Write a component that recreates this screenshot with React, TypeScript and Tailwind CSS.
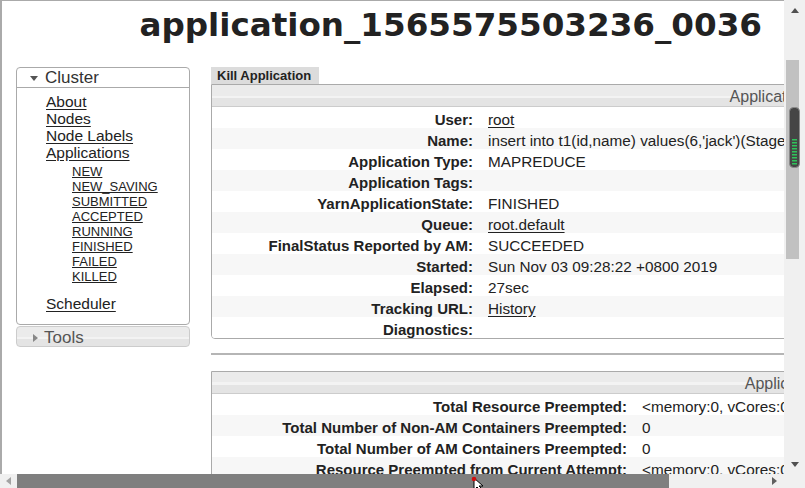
import React from "react";

const subStates = ["NEW", "NEW_SAVING", "SUBMITTED", "ACCEPTED", "RUNNING", "FINISHED", "FAILED", "KILLED"];

const overview: { label: string; value: string; link?: boolean }[] = [
  { label: "User:", value: "root", link: true },
  { label: "Name:", value: "insert into t1(id,name) values(6,'jack')(Stage-1)" },
  { label: "Application Type:", value: "MAPREDUCE" },
  { label: "Application Tags:", value: "" },
  { label: "YarnApplicationState:", value: "FINISHED" },
  { label: "Queue:", value: "root.default", link: true },
  { label: "FinalStatus Reported by AM:", value: "SUCCEEDED" },
  { label: "Started:", value: "Sun Nov 03 09:28:22 +0800 2019" },
  { label: "Elapsed:", value: "27sec" },
  { label: "Tracking URL:", value: "History", link: true },
  { label: "Diagnostics:", value: "" },
];

const metrics = [
  { label: "Total Resource Preempted:", value: "<memory:0, vCores:0>" },
  { label: "Total Number of Non-AM Containers Preempted:", value: "0" },
  { label: "Total Number of AM Containers Preempted:", value: "0" },
  { label: "Resource Preempted from Current Attempt:", value: "<memory:0, vCores:0>" },
];

// header strip shared by the widget boxes
const stripe = "bg-[linear-gradient(#ebebeb_0%,#ebebeb_50%,#f3f3f3_50%,#f3f3f3_62%,#e4e4e4_62%,#e4e4e4_100%)]";

const InfoTable = ({
  title,
  rows,
  labelWidth,
}: {
  title: string;
  rows: { label: string; value: string; link?: boolean }[];
  labelWidth: string;
}) => (
  <div className="w-[675px] border border-[#aaa] rounded-b-[4px] overflow-hidden">
    <div className={`h-[22px] border-b border-[#ccc] ${stripe} text-right pr-[6px] pt-[2px] text-[16px] leading-[20px] text-[#555]`}>
      {title}
    </div>
    {rows.map((r, i) => (
      <div key={r.label} className={`flex h-[21px] items-start pt-[5px] leading-[16px] text-[15px] whitespace-nowrap ${i % 2 === 1 ? "bg-[#f7f7f7]" : "bg-white"}`}>
        <div className={`${labelWidth} shrink-0 text-right font-bold pr-[8px]`}>{r.label}</div>
        <div className="pl-[7px] text-[15.3px]">
          {r.link ? <span className="underline underline-offset-2">{r.value}</span> : r.value}
        </div>
      </div>
    ))}
  </div>
);

const Triangle = ({ dir, color }: { dir: "up" | "down" | "left" | "right"; color: string }) => {
  const pts = {
    up: "0,5 8,5 4,0",
    down: "0,0 8,0 4,5",
    left: "5,0 5,8 0,4",
    right: "0,0 0,8 5,4",
  }[dir];
  const w = dir === "up" || dir === "down" ? 8 : 5;
  const h = dir === "up" || dir === "down" ? 5 : 8;
  return (
    <svg width={w} height={h} viewBox={`0 0 ${w} ${h}`}>
      <polygon points={pts} fill={color} />
    </svg>
  );
};

export default function App() {
  return (
    <div className="relative w-[805px] h-[488px] overflow-hidden bg-white text-[#222] font-['Liberation_Sans',Arial,sans-serif]">
      <div className="flex h-[474px]">
        {/* page viewport */}
        <div className="w-[784px] h-full overflow-hidden border-t border-l-2 border-[#aaa]">
          <div className="w-[782px] h-[66px] pt-[8px] pr-[22px] text-right">
            <h1 className="font-['DejaVu_Sans',Verdana,sans-serif] font-bold text-[32.6px] leading-[32px] text-[#222] whitespace-nowrap">
              application_1565575503236_0036
            </h1>
          </div>

          <div className="flex items-start w-[1000px] pl-[14px] gap-[21px]">
            {/* nav */}
            <div className="w-[174px] shrink-0">
              <div className="border border-[#aaa] rounded-[4px]">
                <div className="h-[20px] flex items-center gap-[7px] pl-[13px] pt-[1px] border-b border-[#aaa]">
                  <Triangle dir="down" color="#555" />
                  <span className="text-[17px] leading-[20px] text-[#333]">Cluster</span>
                </div>
                <div className="pt-[5px] pl-[29px] pb-[12px]">
                  {["About", "Nodes", "Node Labels", "Applications"].map((l) => (
                    <div key={l} className="text-[15.5px] leading-[17px]">
                      <span className="underline underline-offset-2">{l}</span>
                    </div>
                  ))}
                  <div className="mt-[3px] pl-[26px]">
                    {subStates.map((s) => (
                      <div key={s} className="text-[13px] leading-[15px]">
                        <span className="underline underline-offset-1">{s}</span>
                      </div>
                    ))}
                  </div>
                  <div className="mt-[11px] text-[15.5px] leading-[17px]">
                    <span className="underline underline-offset-2">Scheduler</span>
                  </div>
                </div>
              </div>
              <div className={`mt-[1px] h-[21px] flex items-center gap-[6px] pl-[16px] pt-[2px] border border-[#ccc] rounded-[4px] ${stripe}`}>
                <Triangle dir="right" color="#888" />
                <span className="text-[17px] leading-[19px] text-[#555]">Tools</span>
              </div>
            </div>

            {/* main */}
            <div className="w-[700px] shrink-0">
              <div className="w-[108px] h-[17px] bg-[#dcdcdc] pl-[6px] text-[13px] font-bold leading-[17px] whitespace-nowrap">
                Kill Application
              </div>
              <InfoTable title="Application Overview" rows={overview} labelWidth="w-[269px]" />
              <div className="mt-[14px] h-[2px] w-[700px] bg-[#b5b5b5]" />
              <div className="mt-[16px]">
                <InfoTable title="Application Metrics" rows={metrics} labelWidth="w-[423px]" />
              </div>
            </div>
          </div>
        </div>

        {/* vertical scrollbar */}
        <div className="w-[21px] h-full bg-[#f0f0f0] flex flex-col">
          <div className="h-[20px] flex items-center justify-center">
            <Triangle dir="up" color="#505050" />
          </div>
          <div className="mt-[40px] ml-[2px] w-[13px] h-[199px] bg-[#c1c1c1]" />
          <div className="flex-1" />
          <div className="h-[20px] flex items-center justify-center">
            <Triangle dir="down" color="#505050" />
          </div>
        </div>
      </div>

      {/* horizontal scrollbar */}
      <div className="flex h-[14px] bg-[#f0f0f0]">
        <div className="w-[17px] flex items-center justify-center">
          <Triangle dir="left" color="#a3a3a3" />
        </div>
        <div className="w-[652px] h-full bg-[#7f7f7f]" />
        <div className="flex-1" />
        <div className="w-[20px] flex items-center justify-center">
          <Triangle dir="right" color="#606060" />
        </div>
        <div className="w-[21px] bg-[#f0f0f0]" />
      </div>

      {/* overlay scroll indicator */}
      <svg className="absolute left-[789px] top-[107px]" width="11" height="61" viewBox="0 0 11 61">
        <rect x="0.5" y="0.5" width="10" height="60" rx="4" fill="#454545" stroke="#8a8a8a" />
        {Array.from({ length: 9 }).map((_, i) => (
          <rect key={i} x="3" y={32 + i * 3} width="5" height="1.5" fill="#2fc35a" />
        ))}
      </svg>

      {/* mouse cursor */}
      <svg className="absolute left-[471px] top-[476px]" width="14" height="14" viewBox="0 0 14 14">
        <path d="M3 2 L3 14 L6 11 L9 14 L11 13 L8 10 L12 10 Z" fill="#fff" stroke="#000" strokeWidth="1" />
        <circle cx="3" cy="3" r="2.3" fill="#d01010" />
      </svg>
    </div>
  );
}
